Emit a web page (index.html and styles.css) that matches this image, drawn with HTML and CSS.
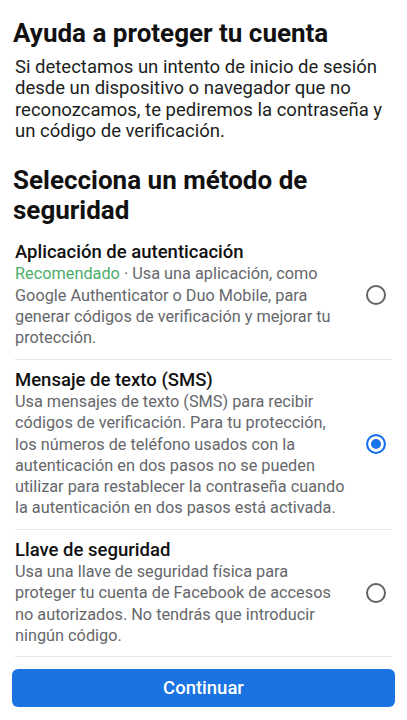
FILE: index.html
```html
<!DOCTYPE html>
<html lang="es">
<head>
  <meta charset="UTF-8">
  <meta name="viewport" content="width=device-width, initial-scale=1.0">
  <title>Autenticación en dos pasos</title>
  <link rel="stylesheet" href="styles.css">
</head>
<body>
  <main class="page">
    <h1 class="title">Ayuda a proteger tu cuenta</h1>
    <p class="intro">Si detectamos un intento de inicio de sesión desde un dispositivo o navegador que no reconozcamos, te pediremos la contraseña y un código de verificación.</p>

    <h2 class="section-title">Selecciona un método de seguridad</h2>

    <div class="methods">
      <label class="method">
        <div class="method-text">
          <div class="method-name">Aplicación de autenticación</div>
          <div class="method-desc"><span class="recommended">Recomendado</span> · Usa una aplicación, como Google Authenticator o Duo Mobile, para generar códigos de verificación y mejorar tu protección.</div>
        </div>
        <span class="radio"></span>
      </label>

      <label class="method">
        <div class="method-text">
          <div class="method-name">Mensaje de texto (SMS)</div>
          <div class="method-desc">Usa mensajes de texto (SMS) para recibir códigos de verificación. Para tu protección, los números de teléfono usados con la autenticación en dos pasos no se pueden utilizar para restablecer la contraseña cuando la autenticación en dos pasos está activada.</div>
        </div>
        <span class="radio checked"></span>
      </label>

      <label class="method">
        <div class="method-text">
          <div class="method-name">Llave de seguridad</div>
          <div class="method-desc">Usa una llave de seguridad física para proteger tu cuenta de Facebook de accesos no autorizados. No tendrás que introducir ningún código.</div>
        </div>
        <span class="radio"></span>
      </label>
    </div>

    <button class="continue">Continuar</button>
  </main>
</body>
</html>
```

FILE: styles.css
```css
body {
  margin: 0;
  background: #fff;
  font-family: Roboto, "Noto Sans", Arial, sans-serif;
  color: #111;
}

.page {
  padding: 18px 15px 0 13px;
}

.title {
  margin: 0;
  font-size: 26px;
  line-height: 30px;
  font-weight: 700;
}

.intro {
  margin: 9px 0 0 2px;
  font-size: 18.5px;
  line-height: 21.3px;
  color: #1c1e21;
}

.section-title {
  margin: 23px 0 7px;
  font-size: 26px;
  line-height: 30px;
  font-weight: 700;
}

.methods {
  margin-left: 2px;
}

.method {
  display: flex;
  align-items: center;
  padding: 10px 0;
  border-bottom: 1px solid #e4e6eb;
}

.method-text {
  width: 331px;
  line-height: 21.3px;
}

.method-name {
  font-size: 18.5px;
  font-weight: 500;
  color: #111;
}

.method-desc {
  font-size: 16.3px;
  color: #65676b;
}

.recommended {
  color: #4cae6a;
}

.radio {
  box-sizing: border-box;
  width: 20px;
  height: 20px;
  margin-left: 20px;
  border: 2px solid #606266;
  border-radius: 50%;
}

.radio.checked {
  border-color: #1a73e8;
  background: #1a73e8;
  box-shadow: inset 0 0 0 3px #fff;
}

.continue {
  display: block;
  width: 383px;
  height: 38px;
  margin: 12px 0 0 -1px;
  border: 0;
  border-radius: 6px;
  background: #1a73e0;
  color: #fff;
  font-family: Roboto, "Noto Sans", Arial, sans-serif;
  font-size: 18.5px;
  font-weight: 500;
}
```
